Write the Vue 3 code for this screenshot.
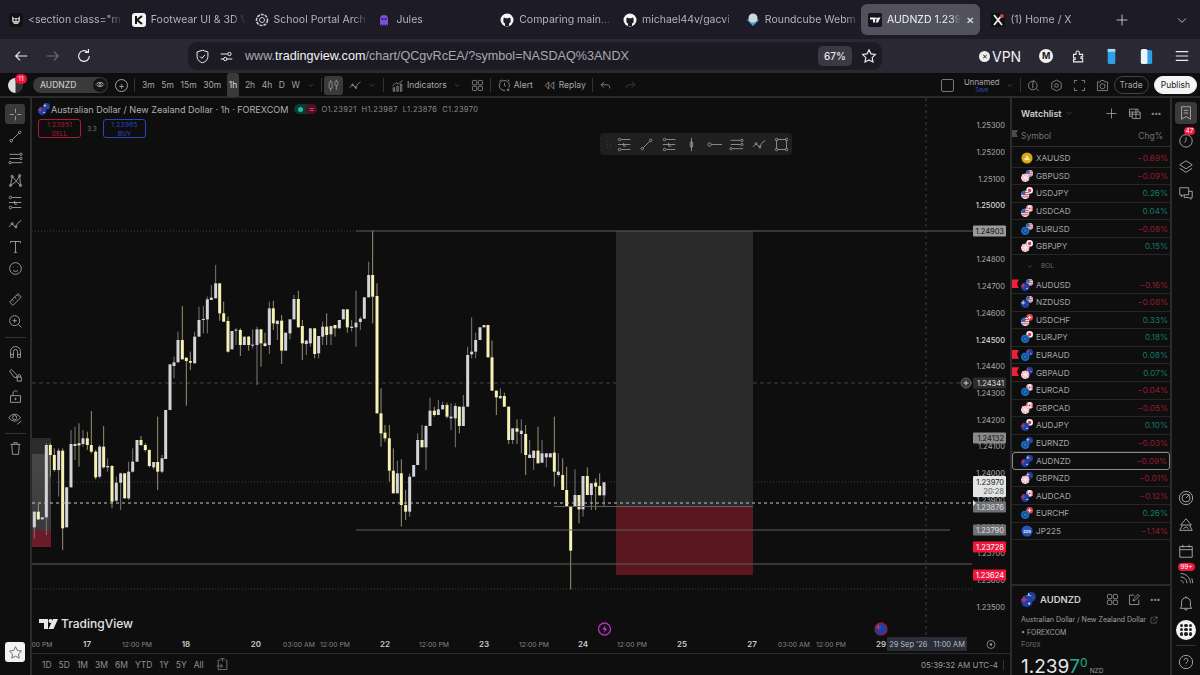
<template>
  <div class="page">
    <!-- icon sheet -->
    <svg class="sheet" aria-hidden="true">
      <symbol id="i-cross" viewBox="0 0 18 18"><path d="M9 2v5M9 11v5M2 9h5M11 9h5" /></symbol>
      <symbol id="i-line" viewBox="0 0 18 18"><path d="M5 13l8-8" /><circle cx="4" cy="14" r="1.5" /><circle cx="14" cy="4" r="1.5" /></symbol>
      <symbol id="i-chan" viewBox="0 0 18 18"><path d="M2 4h12M2 9h12M4 14h13" /><circle cx="15.5" cy="4" r="1.4" /><circle cx="15.5" cy="9" r="1.4" /><circle cx="2.5" cy="14" r="1.4" /></symbol>
      <symbol id="i-xabcd" viewBox="0 0 18 18"><path d="M3 15L5 4l5 6 4-7 1 12-5-5-7 5" /><circle cx="3" cy="15" r="1.3" /><circle cx="5" cy="4" r="1.3" /><circle cx="14" cy="3" r="1.3" /><circle cx="15" cy="15" r="1.3" /></symbol>
      <symbol id="i-fib" viewBox="0 0 18 18"><path d="M5 3h11M1 9h15M5 15h11M8 7v4h3" /><circle cx="3" cy="3" r="1.5" /><circle cx="3" cy="15" r="1.5" /></symbol>
      <symbol id="i-path" viewBox="0 0 18 18"><path d="M1 12l4-4 4 4 3-5 4-3" /><circle cx="5" cy="8" r="1.2" /><circle cx="9.500" cy="12" r="1.2" /></symbol>
      <symbol id="i-text" viewBox="0 0 18 18"><path d="M3 5V3h12v2M9 3v13M7 16h4" /></symbol>
      <symbol id="i-smile" viewBox="0 0 18 18"><circle cx="9" cy="9" r="7" /><path d="M6 11c1.500 2 4.500 2 6 0M6.500 7v.6M11.500 7v.6" /></symbol>
      <symbol id="i-ruler" viewBox="0 0 18 18"><path d="M2 12L12 2l4 4L6 16zM5 9l2 2M8 6l2 2M11 3.500l2 2" /></symbol>
      <symbol id="i-zoom" viewBox="0 0 18 18"><circle cx="8" cy="8" r="6" /><path d="M12.500 12.500L16 16M5.500 8h5M8 5.500v5" /></symbol>
      <symbol id="i-magnet" viewBox="0 0 18 18"><path d="M3 16V9a6 6 0 0 1 12 0v7h-3.500V9a2.500 2.500 0 0 0-5 0v7zM3 12.500h3.500M11.500 12.500H15" /></symbol>
      <symbol id="i-pen-lock" viewBox="0 0 18 18"><path d="M2 5l2-2 7 7-1 3-3-1zM11 12h5v5h-5zM12 12v-1.500a1.500 1.500 0 0 1 3 0V12" /></symbol>
      <symbol id="i-lock" viewBox="0 0 18 18"><path d="M3 8h12v8H3zM6 8V5a3 3 0 0 1 5.500-1.500" /><circle cx="9" cy="12" r=".8" /></symbol>
      <symbol id="i-eye" viewBox="0 0 18 18"><path d="M1 8c4-5.500 10-5.500 14 0-4 5.500-10 5.500-14 0z" /><circle cx="8" cy="8" r="2.500" /><path d="M11 16l5-4" /></symbol>
      <symbol id="i-trash" viewBox="0 0 18 18"><path d="M3 4h12M7 4V2h4v2M4.500 4l.8 12h7.400l.8-12" /></symbol>
      <symbol id="i-star" viewBox="0 0 18 18"><path d="M9 2l2.200 4.600 5 .7-3.600 3.500.9 5L9 13.400l-4.500 2.400.9-5L1.800 7.300l5-.7z" /></symbol>
      <symbol id="i-list" viewBox="0 0 18 18"><path d="M4 2h10v14l-5-3-5 3zM6.500 6h5M6.500 9h5" /></symbol>
      <symbol id="i-clock" viewBox="0 0 18 18"><circle cx="9" cy="10" r="7" /><path d="M9 6v4l-2 2" /></symbol>
      <symbol id="i-layers" viewBox="0 0 18 18"><path d="M9 2l7 4.500L9 11 2 6.500zM2 10.500L9 15l7-4.500" /></symbol>
      <symbol id="i-chat" viewBox="0 0 18 18"><path d="M2 2h10v8H6l-2 2v-2H2zM12 6h4v7h-1.500v2l-2-2H7v-3" /></symbol>
      <symbol id="i-radar" viewBox="0 0 18 18"><circle cx="9" cy="9" r="7.500" /><circle cx="9" cy="9" r="4.500" /><path d="M9 9l4-4" /></symbol>
      <symbol id="i-peak" viewBox="0 0 18 18"><path d="M9 2l6 7H3zM5 9l-3 6h14l-3-6M6 13l3-2 3 2" /></symbol>
      <symbol id="i-cal" viewBox="0 0 18 18"><path d="M2 4h14v12H2zM2 7.500h14M5.500 2v3M12.500 2v3" /></symbol>
      <symbol id="i-feed" viewBox="0 0 18 18"><path d="M3 9c4 0 7 3 7 7M3 5c6 0 11 5 11 11M3 13c1.500 0 3 1.500 3 3M16.500 16c0-2-.3-4-1-5.500" /></symbol>
      <symbol id="i-bell" viewBox="0 0 18 18"><path d="M4 13V8a5 5 0 0 1 10 0v5l1.500 2h-13zM7.500 15.500c0 2 3 2 3 0M9 3V1.500" /></symbol>
      <symbol id="i-help" viewBox="0 0 18 18"><circle cx="9" cy="9" r="7.500" /><path d="M6.800 7a2.200 2.200 0 1 1 3.400 1.900C9.300 9.500 9 10 9 11M9 13v.5" /></symbol>
      <symbol id="i-grid" viewBox="0 0 18 18"><rect x="2" y="2" width="6" height="6" rx="1.500" /><rect x="10" y="2" width="6" height="6" rx="1.500" /><rect x="2" y="10" width="6" height="6" rx="1.500" /><rect x="10" y="10" width="6" height="6" rx="1.500" /></symbol>
      <symbol id="i-edit" viewBox="0 0 18 18"><path d="M15 9v7H2V3h7M7 11l1-3 6-6 2 2-6 6z" /></symbol>
      <symbol id="i-table" viewBox="0 0 18 18"><path d="M2 3h12v4h3v9H6v-3H2zM2 7h12M2 10h15M6 7v6M11 3v13" /></symbol>
      <symbol id="i-plus" viewBox="0 0 18 18"><path d="M9 2v14M2 9h14" /></symbol>
      <symbol id="i-chev" viewBox="0 0 18 18"><path d="M4 7l5 5 5-5" /></symbol>
      <symbol id="i-vert" viewBox="0 0 18 18"><path d="M9 1v16" /><rect x="7.500" y="5.500" width="3" height="7" rx="1.500" /></symbol>
      <symbol id="i-hline" viewBox="0 0 18 18"><path d="M5 9h13" /><circle cx="3" cy="9" r="2" /></symbol>
      <symbol id="i-rect" viewBox="0 0 18 18"><path d="M4 3h10M4 15h10M3 4v10M15 4v10" /><circle cx="3" cy="3" r="1.500" /><circle cx="15" cy="3" r="1.500" /><circle cx="3" cy="15" r="1.500" /><circle cx="15" cy="15" r="1.500" /></symbol>
      <symbol id="i-candles" viewBox="0 0 18 18"><path d="M5 1v3M5 13v4M13 1v2M13 9v6" /><rect x="3" y="4" width="4" height="9" rx="1" /><rect x="11" y="3" width="4" height="6" rx="1" /></symbol>
      <symbol id="i-indic" viewBox="0 0 18 18"><path d="M2 10l5-5 3 2 6-5M3 12h2v5H3zM8 10h2v7H8zM13 7h2v10h-2z" /></symbol>
      <symbol id="i-alert" viewBox="0 0 18 18"><path d="M15 12a7 7 0 1 0-5 3.800M2 3l3-2M16 3l-3-2M9 5v4l2 1M14 13v4M12 15h4" /></symbol>
      <symbol id="i-replay" viewBox="0 0 18 18"><path d="M8 4L3 9l5 5zM15 4l-5 5 5 5z" /></symbol>
      <symbol id="i-undo" viewBox="0 0 18 18"><path d="M7 4L3 8l4 4M3 8h8c3 0 4 2 4 5" /></symbol>
      <symbol id="i-redo" viewBox="0 0 18 18"><path d="M11 4l4 4-4 4M15 8H7c-3 0-4 2-4 5" /></symbol>
      <symbol id="i-hexa" viewBox="0 0 18 18"><path d="M9 1.500L15.500 5v8L9 16.500 2.500 13V5z" /><circle cx="9" cy="9" r="2.500" /></symbol>
      <symbol id="i-full" viewBox="0 0 18 18"><path d="M2 6V2h4M12 2h4v4M16 12v4h-4M6 16H2v-4" /></symbol>
      <symbol id="i-camera" viewBox="0 0 18 18"><path d="M2 4h4l1-2h4l1 2h4v12H2z" /><circle cx="9" cy="10" r="3.500" /></symbol>
      <symbol id="i-search" viewBox="0 0 18 18"><circle cx="8" cy="9" r="6" /><path d="M12.500 13L16 16.500M8 5v8M10 1L8 5" /></symbol>
      <symbol id="i-goto" viewBox="0 0 18 18"><path d="M6 3H3v13h12V3h-2M1 11h8M6 8l3 3-3 3M9 1v4M6 1h6" /></symbol>

      <symbol id="c-usd" viewBox="0 0 10 10"><circle cx="5" cy="5" r="5" fill="#ececec" /><path d="M1 2.500h8M.5 5h9M1 7.500h8" stroke="#e0354a" stroke-width="1.100" /><path d="M0 5a5 5 0 0 1 5-5v5z" fill="#2a62c9" /></symbol>
      <symbol id="c-gbp" viewBox="0 0 10 10"><circle cx="5" cy="5" r="5" fill="#f0a9b6" /><path d="M5 0v10M0 5h10M1.500 1.500l7 7M8.500 1.500l-7 7" stroke="#f7e4e8" stroke-width="1.200" /></symbol>
      <symbol id="c-eur" viewBox="0 0 10 10"><circle cx="5" cy="5" r="5" fill="#1b6fc0" /><circle cx="5" cy="5" r="2.600" fill="none" stroke="#0c3d78" stroke-width="1" /></symbol>
      <symbol id="c-aud" viewBox="0 0 10 10"><circle cx="5" cy="5" r="5" fill="#1f3fa8" /><path d="M0 4h5M2.500 1v5" stroke="#e0354a" stroke-width="1.100" /><circle cx="7" cy="7" r=".8" fill="#fff" /></symbol>
      <symbol id="c-nzd" viewBox="0 0 10 10"><circle cx="5" cy="5" r="5" fill="#1b3f9c" /><path d="M0 4h5M2.500 1v5" stroke="#e8e8f0" stroke-width="1" /><circle cx="7" cy="6" r=".8" fill="#e0354a" /></symbol>
      <symbol id="c-jpy" viewBox="0 0 10 10"><circle cx="5" cy="5" r="5" fill="#f0f0f0" /><circle cx="5" cy="5" r="2.500" fill="#e0354a" /></symbol>
      <symbol id="c-cad" viewBox="0 0 10 10"><circle cx="5" cy="5" r="5" fill="#f4f0f0" /><path d="M0 5a5 5 0 0 1 2-4v8a5 5 0 0 1-2-4zM10 5a5 5 0 0 0-2-4v8a5 5 0 0 0 2-4z" fill="#e0354a" /><circle cx="5" cy="5" r="1.500" fill="#e0354a" /></symbol>
      <symbol id="c-chf" viewBox="0 0 10 10"><circle cx="5" cy="5" r="5" fill="#e6404f" /><path d="M5 2.500v5M2.500 5h5" stroke="#fff" stroke-width="1.400" /></symbol>
    </svg>

    <!-- browser tabs -->
    <div class="tabs">
      <div v-for="t in tabs" :key="t.label" class="tab" :class="{ active: t.active }">
        <svg v-if="t.icon === 'mask'" class="fav" viewBox="0 0 14 14"><rect width="14" height="14" rx="2" fill="#111" /><path d="M3 3l2 2h4l2-2v5l-2 3H5L3 8z" fill="#bbb" /><circle cx="5.500" cy="7" r="1" fill="#111" /><circle cx="8.500" cy="7" r="1" fill="#111" /></svg>
        <svg v-else-if="t.icon === 'k'" class="fav" viewBox="0 0 14 14"><rect width="14" height="14" rx="3" fill="#f3f3f3" /><path d="M4 3v8M10 3L5 7l5 4" stroke="#111" stroke-width="2" fill="none" /></svg>
        <svg v-else-if="t.icon === 'ai'" class="fav" viewBox="0 0 14 14"><circle cx="7" cy="7" r="5.500" fill="none" stroke="#c9c9cf" stroke-width="1.600" stroke-dasharray="3 1" /><circle cx="7" cy="7" r="2.500" fill="none" stroke="#c9c9cf" /></svg>
        <svg v-else-if="t.icon === 'jules'" class="fav" viewBox="0 0 14 14"><path d="M3 13V6a4 4 0 0 1 8 0v7l-1.500-2L8 13l-1-2-1 2-1.500-2z" fill="#7a4fe0" /><circle cx="5.500" cy="6" r="1" fill="#1c1b26" /><circle cx="8.500" cy="6" r="1" fill="#1c1b26" /></svg>
        <svg v-else-if="t.icon === 'gh'" class="fav" viewBox="0 0 14 14"><circle cx="7" cy="7" r="6.500" fill="#f5f5f5" /><path d="M5 13V10.500C3.500 10 3 8.500 3.500 7 3.300 6 3.500 5 4 4.500 5 4.800 5.500 5.200 6 5.300h2C8.500 5.200 9 4.800 10 4.500c.5.500.7 1.500.5 2.500.5 1.500 0 3-1.500 3.500V13z" fill="#1c1b26" /></svg>
        <svg v-else-if="t.icon === 'rc'" class="fav" viewBox="0 0 14 14"><path d="M1 7l6 6 6-6-3-2H4z" fill="#3f9fe0" /><circle cx="7" cy="5" r="4.500" fill="#cfd6dc" /></svg>
        <svg v-else-if="t.icon === 'tv'" class="fav" viewBox="0 0 14 14"><rect width="14" height="14" rx="2" fill="#15141c" /><path d="M2 4.500h5v5H5V6.500H2zM9.500 4.500h3L10 9.500H7.500z" fill="#f2f2f2" /><circle cx="8" cy="5.500" r="1" fill="#f2f2f2" /></svg>
        <svg v-else class="fav" viewBox="0 0 14 14"><rect width="14" height="14" rx="2" fill="#111" /><path d="M3 2l8 10M11 2L3 12" stroke="#eee" stroke-width="1.800" /><circle cx="11" cy="3" r="2" fill="#e0354a" /></svg>
        <span class="tab-label">{{ t.label }}</span>
        <span v-if="t.active" class="tab-x">✕</span>
      </div>
      <svg class="ic new-tab"><use href="#i-plus" /></svg>
      <svg class="ic all-tabs"><use href="#i-chev" /></svg>
    </div>

    <!-- browser url bar -->
    <div class="nav">
      <div class="nav-btns">
        <svg class="nav-ic" viewBox="0 0 18 18"><path d="M16 9H3M8 4L3 9l5 5" /></svg>
        <svg class="nav-ic off" viewBox="0 0 18 18"><path d="M2 9h13M10 4l5 5-5 5" /></svg>
        <svg class="nav-ic" viewBox="0 0 18 18"><path d="M15 9a6 6 0 1 1-2-4.500M14 1v4h-4" /></svg>
      </div>
      <div class="url">
        <svg class="nav-ic small" viewBox="0 0 18 18"><path d="M9 1.500l6.500 2V9c0 4-3 6.500-6.500 7.500C5.500 15.500 2.500 13 2.500 9V3.500zM6 9l2.200 2.200L12 7" /></svg>
        <svg class="nav-ic small" viewBox="0 0 18 18"><path d="M2 6h8M2 12h4M9 12h7" /><circle cx="12.500" cy="6" r="2" /><circle cx="7.500" cy="12" r="2" /></svg>
        <span class="url-text">www.<b>tradingview.com</b>/chart/QCgvRcEA/?symbol=NASDAQ%3ANDX</span>
        <span class="zoom-badge">67%</span>
        <svg class="nav-ic star" viewBox="0 0 18 18"><use href="#i-star" /></svg>
      </div>
      <div class="nav-right">
        <span class="vpn"><i>✕</i>VPN</span>
        <span class="m-badge">M</span>
        <svg class="nav-ic puzzle" viewBox="0 0 18 18"><path d="M3 7h3V5a2 2 0 0 1 4 0v2h4v3h-2v2h2v4H3v-3h2v-2H3z" /></svg>
        <svg class="ext" viewBox="0 0 12 18"><rect x="2" y="1" width="8" height="16" rx="1.500" fill="#2f9fe8" /><rect x="2" y="1" width="8" height="3" fill="#a9d9f7" /></svg>
        <svg class="ext second" viewBox="0 0 14 18"><rect x="5" y="2" width="8" height="15" rx="2" fill="#2f9fe8" /><rect x="1" y="1" width="7" height="16" rx="2" fill="#eaf4fb" /></svg>
        <svg class="nav-ic burger" viewBox="0 0 18 18"><path d="M2 4h14M2 9h14M2 14h14" /></svg>
      </div>
    </div>

    <!-- tradingview header -->
    <div class="tvbar">
      <div class="avatar"><span class="avatar-dot">11</span></div>
      <div class="symbol-pill">AUDNZD
        <span class="pill-ic"><svg viewBox="0 0 18 18"><path d="M2 8c4-5 10-5 14 0-4 5-10 5-14 0z" /><circle cx="9" cy="8" r="2" /></svg></span>
      </div>
      <span class="circle-plus">+</span>
      <span class="sep"></span>
      <div class="frames">
        <span v-for="f in frames" :key="f" class="tf" :class="{ on: f === '1h' }">{{ f }}</span>
      </div>
      <svg class="ic tiny"><use href="#i-chev" /></svg>
      <span class="sep"></span>
      <span class="tool-on"><svg class="ic"><use href="#i-candles" /></svg></span>
      <svg class="ic"><use href="#i-path" /></svg>
      <svg class="ic tiny"><use href="#i-chev" /></svg>
      <span class="sep wide"></span>
      <span class="labelled"><svg class="ic"><use href="#i-indic" /></svg>Indicators</span>
      <svg class="ic tiny"><use href="#i-chev" /></svg>
      <svg class="ic push"><use href="#i-grid" /></svg>
      <span class="sep"></span>
      <span class="labelled push-less"><svg class="ic"><use href="#i-alert" /></svg>Alert</span>
      <span class="labelled push"><svg class="ic"><use href="#i-replay" /></svg>Replay</span>
      <span class="sep"></span>
      <svg class="ic"><use href="#i-undo" /></svg>
      <svg class="ic dim push-more"><use href="#i-redo" /></svg>
      <div class="tv-right">
        <span class="layout-box"></span>
        <span class="layout-name">Unnamed<small>Save</small></span>
        <svg class="ic tiny pull"><use href="#i-chev" /></svg>
        <span class="sep pull"></span>
        <svg class="ic pull"><use href="#i-search" /></svg>
        <svg class="ic"><use href="#i-hexa" /></svg>
        <svg class="ic"><use href="#i-full" /></svg>
        <svg class="ic"><use href="#i-camera" /></svg>
        <span class="btn-trade">Trade</span>
        <span class="btn-publish">Publish</span>
      </div>
    </div>

    <div class="main">
      <!-- drawing tools -->
      <aside class="left">
        <span v-for="(id, i) in leftTop" :key="id" class="left-ic" :class="{ on: i === 0, gap: id === 'i-ruler' }">
          <svg class="ic"><use :href="'#' + id" /></svg>
        </span>
        <span class="left-sep"></span>
        <span v-for="id in leftMid" :key="id" class="left-ic"><svg class="ic"><use :href="'#' + id" /></svg></span>
        <span class="left-sep"></span>
        <span class="left-ic"><svg class="ic"><use href="#i-trash" /></svg></span>
        <span class="fav-box"><svg class="ic"><use href="#i-star" /></svg></span>
      </aside>

      <!-- chart -->
      <section class="chart-col">
        <div class="chart">
          <svg class="plot" viewBox="32 98 978 556">
            <line x1="926" x2="926" y1="98" y2="636" class="cross" />
            <line x1="32" x2="356" y1="231" y2="231" class="dot" />
            <line x1="32" x2="972" y1="383" y2="383" class="dash" />
            <line x1="32" x2="972" y1="482" y2="482" class="dot" />
            <line x1="32" x2="972" y1="589" y2="589" class="dot" />

            <defs>
              <linearGradient id="oldbox" x1="0" x2="0" y1="0" y2="1">
                <stop offset="0" stop-color="#2b2b2b" />
                <stop offset=".17" stop-color="#2b2b2b" />
                <stop offset=".18" stop-color="#474747" />
                <stop offset="1" stop-color="#3a3a3a" />
              </linearGradient>
            </defs>
            <rect x="32" y="438" width="19" height="92" fill="url(#oldbox)" />
            <rect x="32" y="530" width="19" height="17" fill="#6a1a28" />
            <rect x="616" y="231" width="137" height="275" fill="#2a2a2a" />
            <rect x="616" y="506" width="137" height="69" fill="#5a171f" />

            <g v-for="(c, i) in candles" :key="i">
              <line :x1="c.x" :x2="c.x" :y1="c.wt" :y2="c.wb" :class="c.up ? 'wick-w' : 'wick-y'" />
              <rect :x="c.x - 1.5" :y="c.t" width="3" :height="c.h" :class="c.up ? 'body-w' : 'body-y'" />
            </g>

            <line x1="356" x2="975" y1="231" y2="231" class="solid" />
            <line x1="356" x2="950" y1="530" y2="530" class="solid" />
            <line x1="32" x2="972" y1="564" y2="564" class="solid" />
            <line x1="32" x2="972" y1="503" y2="503" class="price-line" />
            <line x1="554" x2="753" y1="506.500" y2="506.500" class="solid" />

            <text v-for="p in prices" :key="p.v" x="1005" :y="p.y" class="axis" :class="{ strong: p.b }" text-anchor="end">{{ p.v }}</text>

            <g v-for="t in tags" :key="t.v">
              <rect x="973" :y="t.y - 5.500" width="33" height="11" rx="1" :fill="t.bg" />
              <text x="1004" :y="t.y + 3" :fill="t.fg" class="tag-text" text-anchor="end">{{ t.v }}</text>
            </g>
            <rect x="973" y="476" width="33" height="21" rx="1" fill="#e4e4e4" />
            <text x="1004" y="485" class="tag-text" fill="#222" text-anchor="end">1.23970</text>
            <text x="1004" y="494" class="tag-text" fill="#555" text-anchor="end">20:28</text>
            <path d="M973 503l-3-3v6z" fill="#ddd" transform="translate(3 0)" />
            <circle cx="966" cy="383" r="5" fill="#333" stroke="#777" stroke-width=".8" />
            <path d="M963.500 383h5M966 380.500v5" stroke="#ddd" stroke-width=".9" />

            <!-- watermark -->
            <path d="M39 619h9v10h-4v-6h-5zM53 619h5l-4.500 10h-5z" fill="#e8e8e8" />
            <circle cx="50.500" cy="621" r="2" fill="#e8e8e8" />
            <text x="61" y="628" class="watermark">TradingView</text>

            <!-- events -->
            <circle cx="604.500" cy="629" r="6" fill="#1a0f1c" stroke="#b531b8" stroke-width="1.300" />
            <path d="M605.500 625l-3 4.500h2.500l-1 3.500 3-4.500h-2.500z" fill="#d845d8" />
            <circle cx="881" cy="629" r="6" fill="#1f3fa8" stroke="#8d1c3a" stroke-width="1.300" />
            <path d="M876 627h5M878.500 624.500v5" stroke="#e0354a" stroke-width="1" />

            <text v-for="t in times" :key="t.x + t.l" :x="t.x" y="647" class="time" :class="{ strong: t.b }" text-anchor="middle">{{ t.l }}</text>
            <rect x="887" y="637" width="80" height="14" rx="1" fill="#2a2e39" />
            <text x="927" y="647" class="time tip" text-anchor="middle">29 Sep '26 &#160; 11:00 AM</text>
            <circle cx="991" cy="644.500" r="4" fill="none" stroke="#999" stroke-width=".8" />
            <circle cx="991" cy="644.500" r="1.200" fill="#999" />
          </svg>

          <!-- legend over chart -->
          <div class="legend">
            <svg class="pair-lg" viewBox="0 0 14 14"><use href="#c-nzd" x="6" y="0" width="8" height="8" /><use href="#c-aud" x="0" y="4" width="10" height="10" /></svg>
            <span class="legend-title">Australian Dollar / New Zealand Dollar · 1h · FOREXCOM</span>
            <span class="legend-dots"><i></i><b>=</b></span>
            <span class="ohlc">O1.23921 &#160;H1.23987 &#160;L1.23876 &#160;C1.23970</span>
          </div>
          <div class="trade-btns">
            <div class="sell"><b>1.23951</b><span>SELL</span></div>
            <small>3.3</small>
            <div class="buy"><b>1.23985</b><span>BUY</span></div>
          </div>
          <div class="float-tools">
            <span class="grip"></span>
            <svg v-for="(id, i) in floatTools" :key="i" class="ic"><use :href="'#' + id" /></svg>
          </div>
        </div>

        <div class="ranges">
          <span v-for="r in ranges" :key="r">{{ r }}</span>
          <svg class="ic goto"><use href="#i-goto" /></svg>
          <div class="clock">05:39:32 AM UTC-4</div>
        </div>
      </section>

      <!-- watchlist -->
      <section class="watch">
        <div class="watch-head">
          <span class="watch-title">Watchlist <svg class="ic tiny"><use href="#i-chev" /></svg></span>
          <svg class="ic"><use href="#i-plus" /></svg>
          <svg class="ic"><use href="#i-table" /></svg>
          <span class="dots">•••</span>
        </div>
        <div class="watch-cols"><i class="cols-mark"></i><span>Symbol</span><span>Chg%</span></div>
        <div class="rows">
          <template v-for="r in rows" :key="r.s">
            <div v-if="r.group" class="group-row">
              <svg class="ic tiny"><use href="#i-chev" /></svg>{{ r.s }}
            </div>
            <div v-else class="row" :class="{ sel: r.s === 'AUDNZD' }">
              <i v-if="r.flag" class="mark"></i>
              <svg class="pair" viewBox="0 0 14 14">
                <template v-if="r.s === 'XAUUSD'">
                  <circle cx="7" cy="7" r="6.500" fill="#d9a514" />
                  <path d="M3.500 9.500l1.500-3h4l1.500 3zM5.500 6l1.500-2.500L8.500 6" fill="#f7e6a8" />
                </template>
                <template v-else-if="r.s === 'JP225'">
                  <circle cx="7" cy="7" r="6.500" fill="#2556b8" />
                  <text x="7" y="8.800" class="idx" text-anchor="middle">225</text>
                </template>
                <template v-else>
                  <use :href="'#c-' + r.s.slice(3).toLowerCase()" x="6" y="0" width="8" height="8" />
                  <use :href="'#c-' + r.s.slice(0, 3).toLowerCase()" x="0" y="4" width="10" height="10" />
                </template>
              </svg>
              <span class="row-sym">{{ r.s }}</span>
              <span class="row-chg" :class="r.c < 0 ? 'neg' : 'pos'">{{ r.c < 0 ? '−' + (-r.c).toFixed(2) : r.c.toFixed(2) }}%</span>
            </div>
          </template>
        </div>
        <div class="detail">
          <div class="detail-head">
            <svg class="pair-big" viewBox="0 0 14 14"><use href="#c-nzd" x="5" y="0" width="9" height="9" /><use href="#c-aud" x="0" y="3" width="11" height="11" /></svg>
            <b>AUDNZD</b>
            <svg class="ic"><use href="#i-grid" /></svg>
            <svg class="ic"><use href="#i-edit" /></svg>
            <span class="dots">•••</span>
          </div>
          <div class="detail-name">Australian Dollar / New Zealand Dollar
            <svg class="ic ext-link" viewBox="0 0 18 18"><path d="M14 10v6H2V4h6M7 11L16 2M10 2h6v6" /></svg>
          </div>
          <div class="detail-name">• FOREXCOM</div>
          <div class="detail-kind">Forex</div>
          <div class="detail-price">1.239<em>7<sup>0</sup></em><small>NZD</small></div>
        </div>
      </section>

      <!-- right strip -->
      <aside class="right">
        <span class="right-ic t on"><svg class="ic"><use href="#i-list" /></svg></span>
        <span class="right-ic t"><svg class="ic"><use href="#i-clock" /></svg><i class="count">47</i></span>
        <span class="right-ic t"><svg class="ic"><use href="#i-layers" /></svg></span>
        <span class="right-ic t"><svg class="ic"><use href="#i-chat" /></svg></span>
        <span class="right-fill"></span>
        <span class="right-ic"><svg class="ic"><use href="#i-radar" /></svg></span>
        <span class="right-ic"><svg class="ic"><use href="#i-peak" /></svg></span>
        <span class="right-ic"><svg class="ic"><use href="#i-cal" /></svg></span>
        <span class="right-ic"><svg class="ic"><use href="#i-feed" /></svg><i class="count wide">99+</i></span>
        <span class="right-ic"><svg class="ic"><use href="#i-bell" /></svg></span>
        <span class="right-ic"><span class="apps"><i v-for="n in 9" :key="n"></i></span></span>
        <span class="right-sep"></span>
        <span class="right-ic last"><svg class="ic"><use href="#i-help" /></svg></span>
      </aside>
    </div>
  </div>
</template>

<script setup>
const tabs = [
  { icon: 'mask', label: '<section class="m' },
  { icon: 'k', label: 'Footwear UI & 3D V' },
  { icon: 'ai', label: 'School Portal Arch' },
  { icon: 'jules', label: 'Jules' },
  { icon: 'gh', label: 'Comparing main...' },
  { icon: 'gh', label: 'michael44v/gacvi' },
  { icon: 'rc', label: 'Roundcube Webm' },
  { icon: 'tv', label: 'AUDNZD 1.2397', active: true },
  { icon: 'x', label: '(1) Home / X' },
]

const frames = ['3m', '5m', '15m', '30m', '1h', '2h', '4h', 'D', 'W']
const leftTop = ['i-cross', 'i-line', 'i-chan', 'i-xabcd', 'i-fib', 'i-path', 'i-text', 'i-smile', 'i-ruler', 'i-zoom']
const leftMid = ['i-magnet', 'i-pen-lock', 'i-lock', 'i-eye']
const floatTools = ['i-fib', 'i-line', 'i-fib', 'i-vert', 'i-hline', 'i-chan', 'i-path', 'i-rect']
const ranges = ['1D', '5D', '1M', '3M', '6M', 'YTD', '1Y', '5Y', 'All']

const rows = [
  { s: 'XAUUSD', c: -0.69 },
  { s: 'GBPUSD', c: -0.09 },
  { s: 'USDJPY', c: 0.26 },
  { s: 'USDCAD', c: 0.04 },
  { s: 'EURUSD', c: -0.08 },
  { s: 'GBPJPY', c: 0.15 },
  { s: 'BOL', group: true },
  { s: 'AUDUSD', c: -0.16, flag: true },
  { s: 'NZDUSD', c: -0.08 },
  { s: 'USDCHF', c: 0.33 },
  { s: 'EURJPY', c: 0.18 },
  { s: 'EURAUD', c: 0.08, flag: true },
  { s: 'GBPAUD', c: 0.07, flag: true },
  { s: 'EURCAD', c: -0.04 },
  { s: 'GBPCAD', c: -0.05 },
  { s: 'AUDJPY', c: 0.1 },
  { s: 'EURNZD', c: -0.03 },
  { s: 'AUDNZD', c: -0.09 },
  { s: 'GBPNZD', c: -0.01 },
  { s: 'AUDCAD', c: -0.12 },
  { s: 'EURCHF', c: 0.26 },
  { s: 'JP225', c: -1.14 },
]

const prices = [
  ['1.25300', 128], ['1.25200', 155], ['1.25100', 182], ['1.25000', 208, true], ['1.24800', 262],
  ['1.24700', 289], ['1.24600', 316], ['1.24500', 343, true], ['1.24400', 369], ['1.24300', 396],
  ['1.24200', 423], ['1.24100', 449], ['1.24000', 476], ['1.23900', 503], ['1.23800', 530],
  ['1.23700', 556], ['1.23600', 583], ['1.23500', 610],
].map(([v, y, b]) => ({ v, y, b }))

const tags = [
  { v: '1.24903', y: 231, bg: '#9a9a9a', fg: '#111' },
  { v: '1.24341', y: 383, bg: '#2c2c2c', fg: '#ddd' },
  { v: '1.24132', y: 438, bg: '#8a8a8a', fg: '#111' },
  { v: '1.23876', y: 507, bg: '#6f7076', fg: '#ddd' },
  { v: '1.23790', y: 530, bg: '#6f7076', fg: '#ddd' },
  { v: '1.23728', y: 547, bg: '#f0173f', fg: '#fff' },
  { v: '1.23624', y: 575, bg: '#f0173f', fg: '#fff' },
]

const times = [
  { x: 42, l: '00 PM' }, { x: 87, l: '17', b: true }, { x: 137, l: '12:00 PM' }, { x: 186, l: '18', b: true },
  { x: 256, l: '20', b: true }, { x: 299, l: '03:00 AM' }, { x: 335, l: '12:00 PM' }, { x: 385, l: '22', b: true },
  { x: 434, l: '12:00 PM' }, { x: 484, l: '23', b: true }, { x: 534, l: '12:00 PM' }, { x: 583, l: '24', b: true },
  { x: 632, l: '12:00 PM' }, { x: 682, l: '25', b: true }, { x: 752, l: '27', b: true }, { x: 794, l: '03:00 AM' },
  { x: 831, l: '12:00 PM' }, { x: 881, l: '29', b: true },
]

// traced candles: [x, kind, body top, body bottom, wick top, wick bottom]
const partA = [
  [103, 'w', 245, 292, 245, 325], [115, 'y', 245, 268, 222, 270], [127, 'w', 262, 268], [139, 'w', 45, 262, 40, 315],
  [151, 'y', 45, 75, 40, 140], [163, 'y', 75, 120, 55, 125], [176, 'w', 62, 120, 55, 200], [188, 'y', 62, 295, 55, 360],
  [200, 'w', 172, 292], [213, 'w', 42, 172, 0, 172], [225, 'w', 42, 48, -10, 90], [237, 'y', 40, 46, -20, 110],
  [249, 'w', 25, 42, 0, 50], [262, 'y', 25, 45, 5, 60], [274, 'y', 45, 65, -57, 70], [287, 'y', 65, 142, 60, 148],
  [299, 'w', 50, 140, 45, 145], [311, 'y', 50, 112, -12, 115], [323, 'w', 108, 112, 85, 125], [336, 'y', 108, 215, 105, 235],
  [349, 'w', 158, 212, 140, 215], [362, 'w', 130, 158, 128, 240], [374, 'y', 130, 205], [386, 'w', 125, 205, 95, 210],
  [398, 'w', 95, 125, 55, 128], [411, 'w', 30, 95], [423, 'y', 30, 45, 18, 48], [436, 'y', 45, 60, 40, 65],
  [448, 'y', 60, 108, 58, 112], [461, 'w', 96, 112, 96, 118], [473, 'y', 96, 125, -40, 180], [486, 'w', 85, 125, 75, 130],
]
const partB = [
  [197, 'w', 540, 687], [210, 'w', 403, 540], [222, 'w', 397, 408, 380, 445], [234, 'w', 330, 397, 305, 397],
  [247, 'y', 330, 388, 228, 388], [259, 'y', 383, 393, 383, 527], [271, 'y', 393, 398, 365, 420], [284, 'w', 320, 400, 305, 400],
  [297, 'w', 270, 320, 230, 320], [310, 'w', 267, 270, 228, 310], [322, 'w', 208, 268, 200, 310], [334, 'w', 203, 210, 165, 210],
  [347, 'w', 160, 205, 105, 205], [359, 'y', 160, 250, 160, 272], [371, 'y', 250, 275, 215, 275], [384, 'y', 273, 365, 260, 368],
  [396, 'w', 303, 358], [408, 'w', 299, 302, 295, 345], [421, 'y', 300, 345, 295, 378], [433, 'w', 320, 345], [446, 'y', 320, 345, 318, 362],
  [458, 'w', 344, 347, 298, 355], [471, 'w', 298, 345, 290, 465], [483, 'y', 298, 340, 298, 410], [495, 'y', 340, 348, 308, 350],
  [508, 'w', 235, 345, 215, 372], [520, 'y', 235, 280, 212, 300], [532, 'w', 272, 282, 272, 330], [545, 'y', 272, 362, 255, 402],
  [557, 'w', 308, 362], [570, 'w', 268, 310, 268, 328], [582, 'w', 207, 268, 195, 268], [595, 'y', 207, 292, 182, 292],
]
const partC = [
  [7, 'y', 318, 370, 300, 420], [19, 'w', 362, 372, 360, 405], [31, 'w', 325, 370, 325, 380], [44, 'y', 325, 402, 325, 415],
  [56, 'w', 348, 400, 348, 415], [68, 'w', 320, 350, 305, 375], [80, 'y', 320, 345, 280, 375], [93, 'w', 318, 343, 318, 375],
  [105, 'y', 315, 325, 315, 350], [118, 'w', 300, 325], [130, 'w', 268, 298], [142, 'y', 268, 322, 268, 338], [155, 'w', 320, 324, 300, 335],
  [168, 'w', 308, 322, 212, 380], [181, 'w', 296, 306, 290, 330], [193, 'w', 232, 296], [206, 'w', 165, 232, 125, 232],
  [218, 'y', 165, 230, 32, 310], [231, 'y', 228, 580, 190, 580], [243, 'y', 580, 640, 505, 680], [255, 'y', 638, 655, 615, 665],
  [268, 'y', 655, 752, 615, 785], [280, 'y', 752, 820, 685, 820], [292, 'w', 760, 820, 722, 820], [304, 'y', 760, 855, 718, 920],
  [317, 'y', 855, 875, 810, 900], [329, 'w', 770, 875, 760, 890], [341, 'w', 735, 770], [353, 'w', 660, 735, 640, 735],
  [366, 'y', 660, 682, 615, 682], [378, 'w', 618, 682, 615, 750], [390, 'w', 572, 618, 533, 618], [403, 'y', 572, 585, 560, 590],
  [415, 'w', 568, 585, 540, 585], [428, 'w', 555, 568, 545, 568], [441, 'y', 555, 590, 548, 595], [453, 'w', 590, 595, 550, 630],
  [466, 'w', 558, 595, 550, 682], [478, 'y', 560, 618, 560, 640], [490, 'w', 560, 618, 525, 618], [503, 'w', 405, 560, 380, 560],
  [515, 'w', 395, 403, 292, 415], [527, 'w', 360, 395, 338, 415], [540, 'w', 322, 360], [552, 'w', 315, 322], [564, 'y', 315, 412],
  [576, 'y', 412, 512, 362, 512], [589, 'y', 512, 532, 512, 585], [601, 'w', 528, 535, 505, 535], [613, 'y', 528, 560, 518, 560],
  [626, 'y', 560, 660, 560, 672], [638, 'w', 625, 660, 625, 672], [651, 'y', 625, 635, 598, 672], [664, 'w', 632, 642, 598, 700],
  [677, 'y', 642, 705, 615, 765], [689, 'w', 704, 714, 660, 714], [701, 'w', 692, 714, 692, 750], [714, 'y', 692, 730, 620, 730],
  [726, 'w', 700, 728, 660, 728], [739, 'w', 700, 712, 700, 742], [751, 'w', 700, 712], [763, 'y', 698, 755, 590, 800],
  [775, 'w', 755, 765, 700, 770], [788, 'y', 765, 810, 715, 810], [800, 'y', 810, 858, 740, 858], [812, 'y', 858, 992, 858, 1108],
  [825, 'w', 825, 858, 748, 858], [837, 'y', 825, 868, 825, 910], [849, 'w', 768, 868, 768, 890], [862, 'y', 768, 825, 742, 825],
  [874, 'w', 790, 825, 790, 870], [887, 'y', 788, 800, 775, 870], [899, 'y', 798, 826, 760, 826], [912, 'w', 787, 826, 787, 858],
]

const toCandle = (ox, oy) => ([x, kind, t, b, wt = t, wb = b]) => ({
  x: ox + x / 3,
  up: kind === 'w',
  t: oy + t / 3,
  h: Math.max((b - t) / 3, 1),
  wt: oy + wt / 3,
  wb: oy + wb / 3,
})

const candles = [
  ...partA.map(toCandle(0, 430)),
  ...partB.map(toCandle(100, 230)),
  ...partC.map(toCandle(300, 220)),
]
</script>

<style scoped>
.page {
  width: 1200px;
  height: 675px;
  overflow: hidden;
  display: flex;
  flex-direction: column;
  background: #0e0e0e;
  color: #b8b8bc;
  font-family: Inter, "Liberation Sans", sans-serif;
}

.sheet {
  position: absolute;
  width: 0;
  height: 0;
}

.ic {
  width: 13px;
  height: 13px;
  flex: none;
  fill: none;
  stroke: currentColor;
  stroke-width: 1;
}

.ic.tiny {
  width: 8px;
  height: 8px;
  color: #7c7c7c;
}

.ic.dim {
  color: #4a4a4a;
}

/* browser chrome */
.tabs {
  height: 39px;
  flex: none;
  display: flex;
  align-items: center;
  padding-left: 6px;
  background: #1c1b26;
}

.tab {
  width: 122.800px;
  height: 31px;
  flex: none;
  display: flex;
  align-items: center;
  gap: 5px;
  padding: 0 6px 0 3px;
  box-sizing: border-box;
  border-radius: 6px;
  color: #b4b4ba;
  font-size: 10.500px;
  white-space: nowrap;
}

.tab.active {
  width: 119px;
  margin: 0 8.400px 0 -4.600px;
  padding-left: 7px;
  background: #52525e;
  color: #f0f0f3;
}

.fav {
  width: 14px;
  height: 14px;
  flex: none;
}

.tab-label {
  flex: 1;
  overflow: hidden;
  -webkit-mask-image: linear-gradient(90deg, #000 85%, transparent);
  mask-image: linear-gradient(90deg, #000 85%, transparent);
}

.tab-x {
  font-size: 10px;
}

.new-tab,
.all-tabs {
  color: #e8e8ea;
  width: 14px;
  height: 14px;
}

.new-tab {
  margin-left: 4px;
}

.all-tabs {
  margin-left: 46px;
}

.nav {
  height: 34px;
  flex: none;
  display: flex;
  align-items: center;
  background: #2a2933;
}

.nav-btns {
  width: 188px;
  flex: none;
  display: flex;
  gap: 15.500px;
  padding-left: 13px;
  box-sizing: border-box;
}

.nav-ic {
  width: 16px;
  height: 16px;
  flex: none;
  fill: none;
  stroke: #ebebee;
  stroke-width: 1.300;
}

.nav-ic.off {
  stroke: #6c6c76;
}

.nav-ic.small {
  width: 15px;
  height: 15px;
  stroke-width: 1.200;
}

.url {
  width: 694px;
  height: 28px;
  flex: none;
  display: flex;
  align-items: center;
  gap: 9px;
  padding-left: 7px;
  box-sizing: border-box;
  border-radius: 9px;
  background: #1c1b24;
}

.url-text {
  flex: 1;
  margin-left: 2px;
  color: #a9a9b2;
  font-family: "Liberation Sans", Arial, sans-serif;
  font-size: 12.600px;
  white-space: nowrap;
}

.url-text b {
  color: #f3f3f5;
  font-weight: 400;
}

.zoom-badge {
  padding: 4px 6px;
  border-radius: 5px;
  background: #3a3944;
  color: #e6e6e8;
  font-size: 10px;
  font-weight: 500;
}

.star {
  margin-right: 5px;
}

.nav-right {
  flex: 1;
  display: flex;
  align-items: center;
  gap: 18px;
  padding-left: 97px;
  color: #f0f0f3;
}

.vpn {
  display: flex;
  align-items: center;
  gap: 2px;
  font-size: 14px;
}

.vpn i {
  width: 11px;
  height: 11px;
  border-radius: 50%;
  background: #eee;
  color: #222;
  font-size: 7px;
  font-style: normal;
  text-align: center;
  line-height: 11px;
}

.m-badge {
  width: 14px;
  height: 14px;
  border-radius: 50%;
  background: #f0f0f3;
  color: #222;
  font-size: 9px;
  font-weight: 700;
  text-align: center;
  line-height: 14px;
}

.puzzle {
  width: 15px;
}

.ext {
  width: 15px;
  height: 17px;
  flex: none;
}

.ext.second,
.burger {
  margin-left: 2px;
}

/* tradingview header */
.tvbar {
  flex: none;
  display: flex;
  align-items: center;
  gap: 6px;
  padding: 1px 0 0 8px;
  height: 22px;
  border-bottom: 2px solid #2b2b2b;
  background: #0e0e0e;
  color: #a6a6a6;
  font-size: 8.500px;
}

.avatar {
  width: 15px;
  height: 15px;
  border-radius: 50%;
  background: linear-gradient(90deg, #ddd 45%, #333 55%);
  position: relative;
  margin-right: 4px;
  flex: none;
}

.avatar-dot {
  position: absolute;
  top: -4px;
  left: 7px;
  width: 12px;
  height: 10px;
  border-radius: 5px;
  background: #ee1438;
  color: #fff;
  font-size: 6.500px;
  text-align: center;
  line-height: 10px;
}

.symbol-pill {
  width: 75px;
  height: 16px;
  flex: none;
  display: flex;
  align-items: center;
  justify-content: space-between;
  padding: 0 1px 0 7px;
  box-sizing: border-box;
  border-radius: 8px;
  background: #3a3a3a;
  color: #c8c8c8;
  font-weight: 500;
}

.pill-ic {
  width: 14px;
  height: 14px;
  border-radius: 50%;
  background: #141414;
  display: flex;
  align-items: center;
  justify-content: center;
}

.pill-ic svg {
  width: 10px;
  height: 10px;
  fill: none;
  stroke: #c8c8c8;
  stroke-width: 1.400;
}

.circle-plus {
  width: 11px;
  height: 11px;
  flex: none;
  margin-left: 1px;
  border: 1px solid #a6a6a6;
  border-radius: 50%;
  text-align: center;
  line-height: 10px;
  font-size: 10px;
}

.sep {
  width: 1px;
  height: 14px;
  flex: none;
  background: #333;
}

.sep.wide {
  margin: 0 1px;
}

.frames {
  display: flex;
  align-items: center;
  gap: 4.600px;
}

.tf {
  padding: 4px 1px;
  border-radius: 3px;
}

.tf.on {
  padding: 7px 2px;
  background: #3a3a3a;
  color: #ddd;
}

.tool-on {
  margin-left: -4px;
  padding: 3px 3px;
  border-radius: 3px;
  background: #3a3a3a;
  display: flex;
}

.labelled {
  display: flex;
  align-items: center;
  gap: 3px;
  white-space: nowrap;
}

.push {
  margin-left: 4px;
}

.push-less {
  margin-left: 1px;
}

.push-more {
  margin-left: 6px;
}

.tv-right {
  margin-left: auto;
  display: flex;
  align-items: center;
  gap: 10px;
  padding-right: 3px;
}

.pull {
  margin-left: -4px;
}

.layout-box {
  width: 11px;
  height: 11px;
  border: 1px solid #777;
  border-radius: 2px;
}

.layout-name {
  display: flex;
  flex-direction: column;
  align-items: center;
  font-size: 7.800px;
  line-height: 9px;
}

.layout-name small {
  color: #2a4fd0;
  font-size: 5.500px;
  line-height: 6px;
}

.btn-trade,
.btn-publish {
  padding: 3px 5px;
  border-radius: 9px;
  border: 1px solid #444;
  margin-left: -5px;
}

.btn-publish {
  margin-left: -5px;
  padding: 3px 6px;
  background: #f4f4f4;
  border-color: #f4f4f4;
  color: #222;
}

/* body */
.main {
  flex: 1;
  min-height: 0;
  display: flex;
}

.left {
  width: 30px;
  flex: none;
  display: flex;
  flex-direction: column;
  align-items: center;
  padding-top: 6px;
  border-right: 2px solid #2b2b2b;
  color: #adadad;
}

.left .ic {
  width: 15px;
  height: 15px;
}

.left-ic {
  width: 20px;
  height: 20px;
  flex: none;
  margin-bottom: 2.100px;
  display: flex;
  align-items: center;
  justify-content: center;
  border-radius: 3px;
}

.left-ic.on {
  background: #3a3a3a;
}

.left-ic.gap {
  margin-top: 9px;
}

.left-sep {
  width: 21px;
  height: 1px;
  flex: none;
  margin: 3px 0 4px;
  background: #333;
}

.fav-box {
  margin-top: auto;
  margin-bottom: 13px;
  width: 20px;
  height: 20px;
  display: flex;
  align-items: center;
  justify-content: center;
  border-radius: 3px;
  background: #f2f2f2;
  color: #555;
}

.chart-col {
  width: 978px;
  flex: none;
  display: flex;
  flex-direction: column;
}

.chart {
  height: 556px;
  flex: none;
  position: relative;
  border-bottom: 1px solid #2b2b2b;
  box-sizing: border-box;
}

.plot {
  display: block;
  width: 978px;
  height: 556px;
}

.plot line {
  stroke-width: 1;
}

.cross {
  stroke: #3a3a3a;
  stroke-dasharray: 3 3;
}

.dot {
  stroke: #3e3e3e;
  stroke-dasharray: 1 2;
}

.dash {
  stroke: #454545;
  stroke-dasharray: 4 3;
}

.solid {
  stroke: #5f5f5f;
}

.price-line {
  stroke: #c8c8c8;
  stroke-dasharray: 3 3;
}

.wick-w {
  stroke: #77787d;
}

.wick-y {
  stroke: #97946f;
}

.body-w {
  fill: #d3d4da;
}

.body-y {
  fill: #f7f2b4;
}

.axis {
  fill: #a8a8a8;
  font-size: 7.500px;
}

.axis.strong {
  fill: #d6d6d6;
  font-weight: 500;
}

.tag-text {
  font-size: 7.500px;
}

.watermark {
  fill: #e3e3e3;
  font-size: 12px;
  font-weight: 500;
}

.time {
  fill: #85858a;
  font-size: 6.800px;
}

.time.strong {
  fill: #c9c9c9;
  font-weight: 600;
  font-size: 8px;
}

.time.tip {
  fill: #b9bcc5;
  font-size: 7.400px;
}

.legend {
  position: absolute;
  top: 5px;
  left: 6px;
  display: flex;
  align-items: center;
  gap: 1px;
  white-space: nowrap;
}

.pair-lg {
  width: 12px;
  height: 12px;
}

.legend-title {
  color: #b0b0b0;
  font-size: 9.050px;
}

.legend-dots {
  margin-left: 5px;
  display: flex;
  align-items: center;
  justify-content: space-around;
  width: 23px;
  height: 10px;
  border-radius: 5px;
  background: linear-gradient(90deg, #0b3b33 50%, #4a1226 50%);
}

.legend-dots i {
  width: 5px;
  height: 5px;
  border-radius: 50%;
  background: #1fbfa0;
}

.legend-dots b {
  color: #e0356b;
  font-size: 8px;
  line-height: 10px;
}

.ohlc {
  margin-left: 3px;
  color: #8c8c8c;
  font-size: 7.500px;
  letter-spacing: .35px;
}

.trade-btns {
  position: absolute;
  top: 21px;
  left: 6px;
  display: flex;
  align-items: center;
  gap: 4px;
}

.trade-btns small {
  color: #777;
  font-size: 6.500px;
  width: 14px;
  text-align: center;
}

.sell,
.buy {
  width: 43px;
  height: 19px;
  box-sizing: border-box;
  display: flex;
  flex-direction: column;
  align-items: center;
  border-radius: 3px;
  font-size: 6.500px;
  line-height: 8.500px;
  padding-top: 1px;
  border: 1px solid #b01a38;
  color: #b01a38;
}

.buy {
  border-color: #2a45c4;
  color: #2a45c4;
}

.sell b,
.buy b {
  font-weight: 400;
  letter-spacing: .3px;
}

.float-tools {
  position: absolute;
  top: 35px;
  left: 568px;
  width: 192px;
  height: 22px;
  box-sizing: border-box;
  display: flex;
  align-items: center;
  gap: 7.500px;
  padding-left: 6px;
  border-radius: 3px;
  background: #1f1f1f;
  color: #9c9c9c;
}

.float-tools .ic {
  width: 15px;
  height: 15px;
}

.grip {
  width: 5px;
  height: 9px;
  flex: none;
  margin-right: -2px;
  background: radial-gradient(#3c3c3c 40%, transparent 45%) 0 0 / 3px 3px;
}

.ranges {
  flex: 1;
  display: flex;
  align-items: center;
  gap: 7px;
  padding-left: 10px;
  color: #8f8f8f;
  font-size: 8.500px;
}

.goto {
  margin-left: 5px;
}

.clock {
  margin-left: auto;
  padding-right: 5px;
  margin-right: 6px;
  border-right: 1px solid #333;
  color: #9a9a9a;
  font-size: 8px;
}

/* watchlist */
.watch {
  width: 162px;
  flex: none;
  display: flex;
  flex-direction: column;
  border-left: 2px solid #2b2b2b;
  border-right: 2px solid #2b2b2b;
  box-sizing: border-box;
}

.watch-head {
  height: 30px;
  flex: none;
  display: flex;
  align-items: center;
  gap: 10px;
  padding: 0 9px 0 9px;
}

.watch-title {
  margin-right: auto;
  display: flex;
  align-items: center;
  gap: 3px;
  color: #cfcfcf;
  font-size: 9px;
  font-weight: 600;
}

.dots {
  color: #8a8a8a;
  font-size: 7px;
  letter-spacing: -.5px;
}

.watch-cols {
  height: 15px;
  flex: none;
  display: flex;
  justify-content: space-between;
  align-items: center;
  padding: 0 7px 3px 9px;
  border-bottom: 1px solid #2e2e2e;
  color: #737373;
  font-size: 8.500px;
  position: relative;
}

.cols-mark {
  position: absolute;
  left: 0;
  top: 2px;
  width: 6px;
  height: 7px;
  background: #4a4a4a;
  clip-path: polygon(0 0, 100% 0, 70% 50%, 100% 100%, 0 100%);
}

.rows {
  flex: 1;
  padding-top: 3px;
}

.row {
  height: 17.580px;
  box-sizing: border-box;
  display: flex;
  align-items: center;
  padding: 0 2px 0 9px;
  border-bottom: 1px solid #262626;
  position: relative;
  font-size: 8.200px;
}

.row.sel {
  border: 1px solid #8a8a8a;
  border-radius: 3px;
  padding-left: 8px;
}

.mark {
  position: absolute;
  left: 0;
  top: 3px;
  width: 7px;
  height: 9px;
  background: #f01f35;
  clip-path: polygon(0 0, 100% 0, 70% 50%, 100% 100%, 0 100%);
}

.pair {
  width: 12px;
  height: 12px;
  flex: none;
}

.idx {
  fill: #fff;
  font-size: 4.500px;
  font-weight: 700;
}

.row-sym {
  margin-left: 3px;
  color: #a4a4a4;
}

.row-chg {
  margin-left: auto;
}

.neg {
  color: #96192f;
}

.pos {
  color: #0f7a68;
}

.group-row {
  height: 21px;
  display: flex;
  align-items: center;
  gap: 7px;
  padding-left: 14px;
  color: #6a6a6a;
  font-size: 6.500px;
}

.detail {
  height: 91px;
  flex: none;
  box-sizing: border-box;
  padding: 5px 10px 0 9px;
  border-top: 2px solid #2b2b2b;
  overflow: hidden;
}

.detail-head {
  height: 16px;
  display: flex;
  align-items: center;
  gap: 9px;
  margin-bottom: 6px;
}

.pair-big {
  width: 15px;
  height: 15px;
  flex: none;
  margin-right: -5px;
}

.detail-head b {
  margin-right: auto;
  color: #cfcfcf;
  font-size: 9.500px;
  font-weight: 600;
}

.detail-name {
  display: flex;
  align-items: center;
  gap: 4px;
  color: #a0a0a0;
  font-size: 7px;
  line-height: 13px;
  white-space: nowrap;
}

.ext-link {
  width: 8px;
  height: 8px;
}

.detail-kind {
  color: #666;
  font-size: 7.500px;
  line-height: 12px;
}

.detail-price {
  margin-top: 5px;
  display: flex;
  align-items: baseline;
  color: #e8e8e8;
  font-size: 19px;
  line-height: 22px;
}

.detail-price em {
  color: #22ab94;
  font-style: normal;
}

.detail-price sup {
  font-size: 12px;
  vertical-align: 6px;
  line-height: 0;
}

.detail-price small {
  margin-left: 2px;
  color: #999;
  font-size: 6.500px;
}

/* right strip */
.right {
  flex: 1;
  display: flex;
  flex-direction: column;
  align-items: center;
  padding-top: 4px;
  color: #b0b0b0;
}

.right-ic {
  width: 22px;
  height: 22px;
  flex: none;
  margin-bottom: 4.300px;
  display: flex;
  align-items: center;
  justify-content: center;
  border-radius: 4px;
  position: relative;
}

.right-ic.t {
  margin-bottom: 5px;
}

.right-ic.last {
  margin-bottom: 2px;
}

.right-ic .ic {
  width: 16px;
  height: 16px;
}

.right-ic.on {
  background: #3a3a3a;
}

.right-fill {
  flex: 1;
}

.count {
  position: absolute;
  top: -2px;
  left: 9px;
  min-width: 11px;
  height: 8px;
  border-radius: 4px;
  background: #f0173f;
  color: #fff;
  font-size: 6.500px;
  font-style: normal;
  text-align: center;
  line-height: 8px;
}

.count.wide {
  left: 3px;
  top: -3px;
  width: 17px;
}

.apps {
  width: 20px;
  height: 20px;
  box-sizing: border-box;
  padding: 4px;
  display: grid;
  grid-template-columns: repeat(3, 1fr);
  gap: 1px;
  border-radius: 50%;
  background: #f4f4f4;
}

.apps i {
  border-radius: 50%;
  background: #222;
}

.right-sep {
  width: 20px;
  height: 1px;
  flex: none;
  margin: 0 0 5px;
  background: #333;
}
</style>

<style>
body {
  background: #0e0e0e;
}
</style>
